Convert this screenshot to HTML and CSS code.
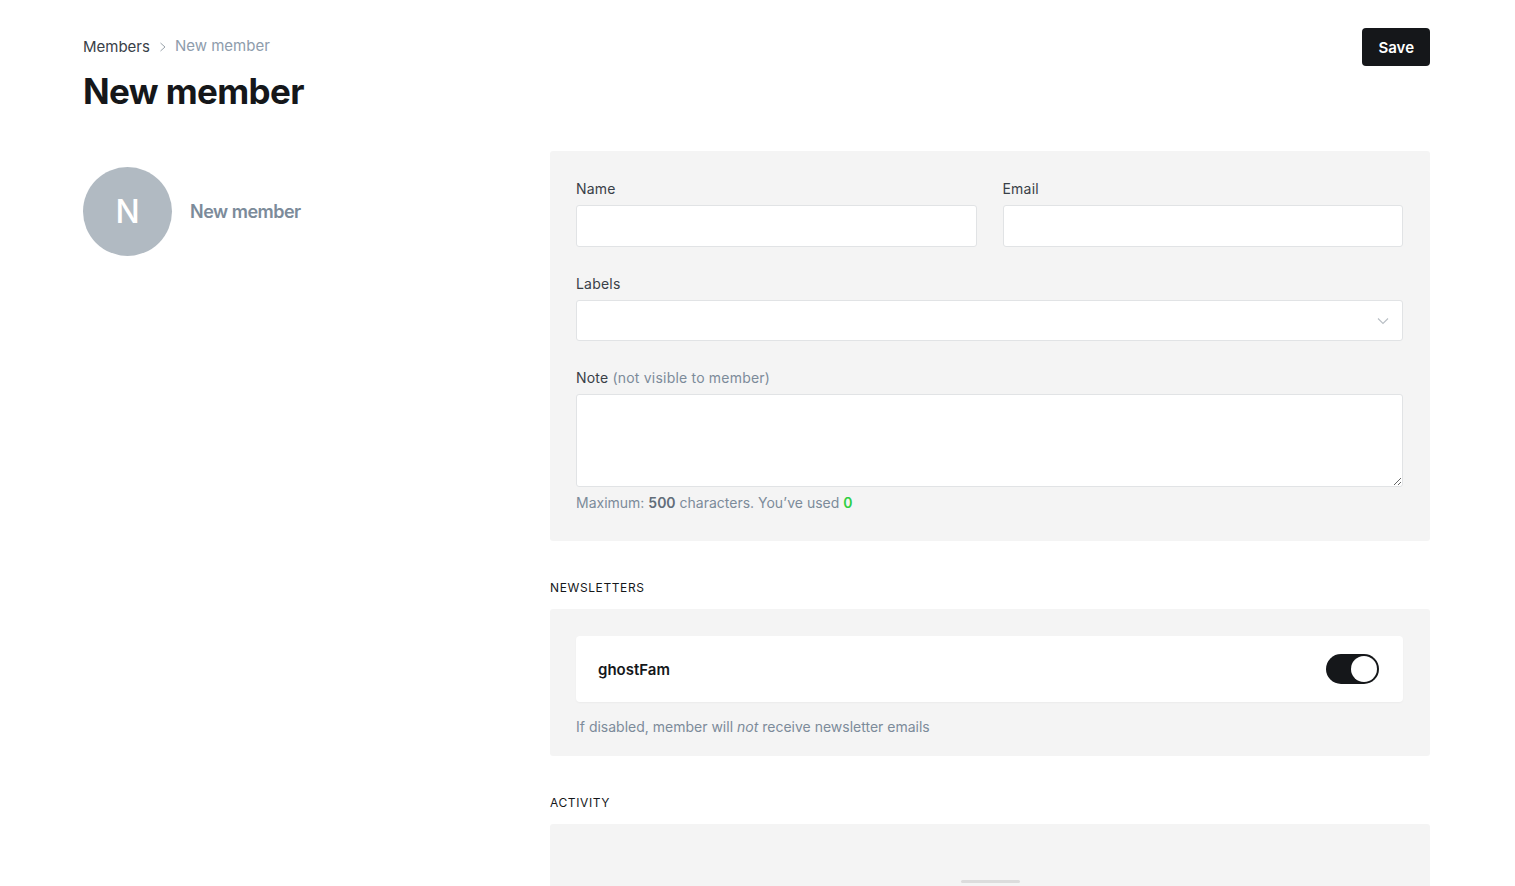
FILE: index.html
```html
<!DOCTYPE html>
<html lang="en">
<head>
    <meta charset="UTF-8">
    <meta name="viewport" content="width=device-width, initial-scale=1.0">
    <title>New member</title>
    <link rel="stylesheet" href="styles.css">
</head>
<body>
    <div class="page">
        <header class="page-header">
            <div>
                <div class="breadcrumb">
                    <a href="#" class="crumb-link">Members</a>
                    <svg class="crumb-sep" width="8" height="12" viewBox="0 0 8 12"><path d="M1.5 2 L6 6 L1.5 10" fill="none" stroke="#9aa3ab" stroke-width="1"/></svg>
                    <span class="crumb-current">New member</span>
                </div>
                <h1 class="page-title">New member</h1>
            </div>
            <button class="save-btn">Save</button>
        </header>

        <div class="layout">
            <aside class="member-side">
                <div class="avatar">N</div>
                <div class="member-name">New member</div>
            </aside>

            <main class="member-main">
                <section class="panel form-panel">
                    <div class="row">
                        <div class="form-group">
                            <label for="name">Name</label>
                            <input type="text" id="name" class="field">
                        </div>
                        <div class="form-group">
                            <label for="email">Email</label>
                            <input type="email" id="email" class="field">
                        </div>
                    </div>
                    <div class="form-group">
                        <label for="labels">Labels</label>
                        <div class="select-field" id="labels">
                            <svg width="12" height="8" viewBox="0 0 12 8"><path d="M1 1.5 L6 6.5 L11 1.5" fill="none" stroke="#b8bec4" stroke-width="1.1"/></svg>
                        </div>
                    </div>
                    <div class="form-group note-group">
                        <label for="note">Note <span class="muted">(not visible to member)</span></label>
                        <textarea id="note" class="field note-field"></textarea>
                        <p class="hint">Maximum: <b>500</b> characters. You’ve used <b class="count">0</b></p>
                    </div>
                </section>

                <h4 class="section-title">Newsletters</h4>
                <section class="panel newsletter-panel">
                    <div class="newsletter-card">
                        <span class="newsletter-name">ghostFam</span>
                        <span class="toggle"><span class="knob"></span></span>
                    </div>
                    <p class="hint">If disabled, member will <i>not</i> receive newsletter emails</p>
                </section>

                <h4 class="section-title">Activity</h4>
                <section class="panel activity-panel">
                    <div class="loader"></div>
                </section>
            </main>
        </div>
    </div>
</body>
</html>
```

FILE: styles.css
```css
* {
    box-sizing: border-box;
}
body {
    margin: 0;
    font-family: Inter, "Noto Sans", sans-serif;
    color: #15171a;
    background: #fff;
    overflow: hidden;
}
.page {
    padding: 28px 85px 0 83px;
}
.page-header {
    display: flex;
    justify-content: space-between;
    align-items: flex-start;
}
.breadcrumb {
    display: flex;
    align-items: center;
    gap: 7px;
    font-size: 15px;
    height: 43px;
    padding-bottom: 6px;
}
.crumb-link {
    color: #394047;
    text-decoration: none;
}
.crumb-sep {
    margin: 1px 1px 0 2px;
}
.crumb-current {
    color: #8e9cac;
    margin-top: -2px;
}
.page-title {
    margin: 0;
    font-size: 35px;
    font-weight: 700;
    letter-spacing: -0.6px;
    line-height: 40px;
}
.save-btn {
    background: #15171a;
    color: #fff;
    border: none;
    border-radius: 4px;
    height: 38px;
    padding: 0 16px;
    font-family: inherit;
    font-size: 15px;
    font-weight: 600;
    cursor: pointer;
}
.layout {
    display: flex;
    margin-top: 40px;
}
.member-side {
    flex: 1;
    display: flex;
    align-items: center;
    gap: 18px;
    align-self: flex-start;
    padding-top: 16px;
}
.avatar {
    width: 89px;
    height: 89px;
    border-radius: 50%;
    background: #b1bac2;
    color: #fff;
    font-size: 32px;
    font-weight: 500;
    display: flex;
    align-items: center;
    justify-content: center;
}
.member-name {
    font-size: 18px;
    font-weight: 600;
    letter-spacing: -0.5px;
    color: #7c8b9a;
}
.member-main {
    width: 880px;
}
.panel {
    background: #f4f4f4;
    border-radius: 3px;
}
.form-panel {
    padding: 28px 27px 29px 26px;
}
.row {
    display: flex;
    gap: 26px;
}
.row .form-group {
    flex: 1;
}
.form-group {
    margin-bottom: 27px;
}
.note-group {
    margin-bottom: 0;
}
label {
    display: block;
    font-size: 14px;
    line-height: 20px;
    color: #394047;
    margin-bottom: 6px;
    letter-spacing: 0.2px;
}
.muted {
    color: #7c8b9a;
}
.field,
.select-field {
    display: block;
    width: 100%;
    height: 42px;
    border: 1px solid #e1e3e5;
    border-radius: 3px;
    background: #fff;
    font-family: inherit;
    font-size: 15px;
}
.select-field {
    height: 41px;
    display: flex;
    align-items: center;
    justify-content: flex-end;
    padding-right: 13px;
}
.note-field {
    height: 93px;
    resize: vertical;
}
.hint {
    margin: 7px 0 0;
    font-size: 14px;
    line-height: 18px;
    color: #7c8b9a;
}
.hint b {
    font-weight: 600;
    color: #626d79;
}
.hint .count {
    color: #30cf43;
}
.section-title {
    margin: 39px 0 13px;
    font-size: 12px;
    font-weight: 400;
    text-transform: uppercase;
    letter-spacing: 0.6px;
    line-height: 16px;
}
.newsletter-panel {
    padding: 27px 27px 20px 26px;
}
.newsletter-card {
    background: #fff;
    border-radius: 4px;
    height: 66px;
    padding: 0 24px 0 22px;
    display: flex;
    align-items: center;
    justify-content: space-between;
    box-shadow: 0 1px 2px rgba(0, 0, 0, 0.04);
}
.newsletter-name {
    font-size: 15px;
    font-weight: 600;
}
.toggle {
    width: 53px;
    height: 30px;
    border-radius: 15px;
    background: #15171a;
    position: relative;
}
.knob {
    position: absolute;
    right: 2px;
    top: 2px;
    width: 26px;
    height: 26px;
    border-radius: 50%;
    background: #fff;
}
.newsletter-panel .hint {
    margin-top: 16px;
}
.activity-panel {
    height: 200px;
    display: flex;
    justify-content: center;
    padding-top: 56px;
}
.loader {
    width: 59px;
    height: 3px;
    border-radius: 2px;
    background: #dcdcdc;
}
```
